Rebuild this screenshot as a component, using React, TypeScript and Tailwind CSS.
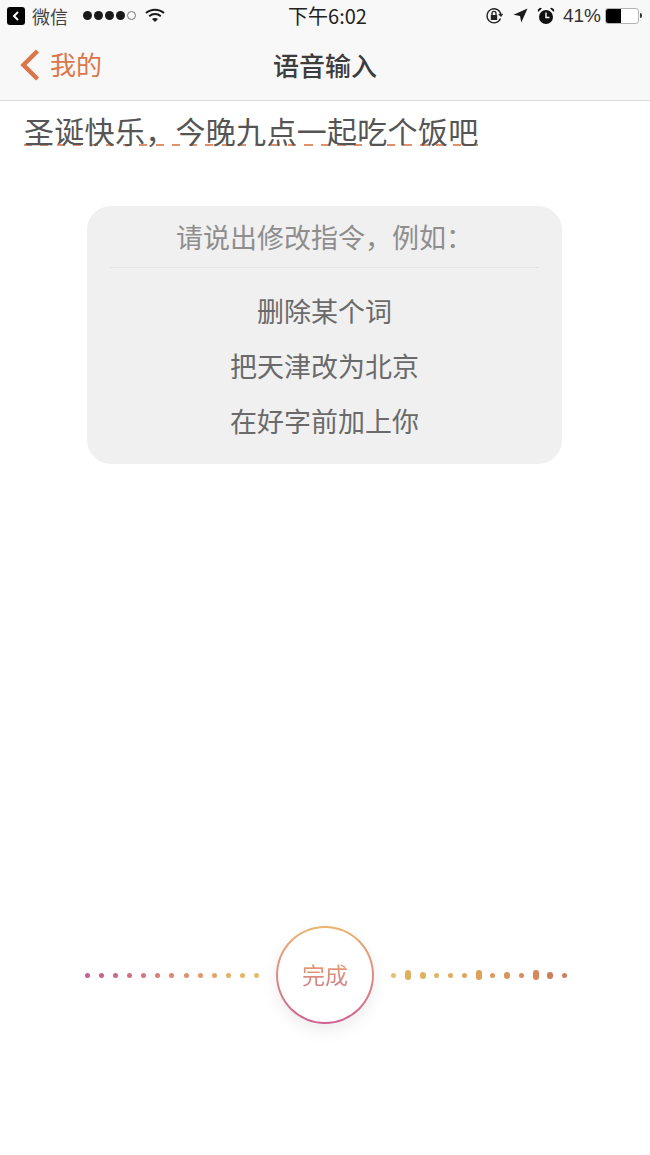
const leftDots = ["#c9608f", "#ca6390", "#cc688a", "#d06f85", "#d4767f", "#d87e78", "#dc8772", "#df906c", "#e29a68", "#e4a466", "#e6ae66", "#e6b468", "#e3bb6c"];

const rightDots = [
  { color: "#e8c070", size: "dot" },
  { color: "#dfb05c", size: "tall" },
  { color: "#e0b260", size: "mid" },
  { color: "#e2b266", size: "dot" },
  { color: "#e2aa62", size: "dot" },
  { color: "#e0a460", size: "dot" },
  { color: "#dfa05a", size: "tall" },
  { color: "#dc9a5e", size: "dot" },
  { color: "#d8945e", size: "mid" },
  { color: "#d88e62", size: "dot" },
  { color: "#d8865a", size: "tall" },
  { color: "#cf7c58", size: "mid" },
  { color: "#c9805e", size: "dot" },
];

const cjk = "font-['Noto_Sans_CJK_SC','Noto_Sans',sans-serif]";

const StatusBar = () => (
  <div className="flex h-[33px] items-center justify-between pb-[2px] pl-[7px] pr-[8px] text-[#222]">
    <div className="flex w-[206px] items-center">
      <div className="flex h-[18px] w-[18px] items-center justify-center rounded-[3px] bg-black">
        <svg width="8" height="10" viewBox="0 0 8 10" fill="none" stroke="white" strokeWidth="2">
          <path d="M6 1 L2 5 L6 9" />
        </svg>
      </div>
      <span className="ml-[7px] text-[18px] leading-none text-[#444]">微信</span>
      <div className="ml-[15px] flex items-center gap-[2px]">
        <span className="h-[9px] w-[9px] rounded-full bg-[#1a1a1a]" />
        <span className="h-[9px] w-[9px] rounded-full bg-[#1a1a1a]" />
        <span className="h-[9px] w-[9px] rounded-full bg-[#1a1a1a]" />
        <span className="h-[9px] w-[9px] rounded-full bg-[#1a1a1a]" />
        <span className="h-[9px] w-[9px] rounded-full border border-[#777]" />
      </div>
      <svg className="ml-[9px]" width="20" height="15" viewBox="0 0 20 15" fill="none" stroke="#1a1a1a" strokeWidth="2">
        <path d="M1 5 C6 0.5 14 0.5 19 5" />
        <path d="M4.2 8.2 C7.5 5.4 12.5 5.4 15.8 8.2" />
        <path d="M10 14 L7 11 C8.8 9.8 11.2 9.8 13 11 Z" fill="#1a1a1a" stroke="none" />
      </svg>
    </div>
    <span className="text-[20px] leading-none">下午6:02</span>
    <div className="flex w-[200px] items-center justify-end">
      <svg width="18" height="18" viewBox="0 0 18 18" fill="none" stroke="#222" strokeWidth="1.3">
        <path d="M15.5 11.5 A7 7 0 1 1 16 8" />
        <path d="M13.8 7 L16 9 L17.6 6.8" />
        <rect x="5.8" y="8" width="6.4" height="5" fill="#222" stroke="none" />
        <path d="M7 8 V6.4 A2 2 0 0 1 11 6.4 V8" />
      </svg>
      <svg className="ml-[10px]" width="15" height="15" viewBox="0 0 15 15" fill="#1a1a1a">
        <path d="M14.5 0.5 L8.3 14.5 L7 8 L0.5 6.7 Z" />
      </svg>
      <svg className="ml-[9px]" width="18" height="18" viewBox="0 0 18 18" fill="#111">
        <circle cx="9" cy="10" r="7" />
        <path d="M1 5 L5 1.5 L3 0.8 L0.8 2.8 Z" />
        <path d="M17 5 L13 1.5 L15 0.8 L17.2 2.8 Z" />
        <path d="M9 5.5 V10.5 H12.5" fill="none" stroke="white" strokeWidth="1.4" />
      </svg>
      <span className="ml-[8px] font-['Liberation_Sans',sans-serif] text-[19px] leading-none text-[#333]">41%</span>
      <div className="ml-[4px] flex items-center">
        <div className="h-[16px] w-[34px] overflow-hidden rounded-[3px] border border-[#b5b5b5] bg-white">
          <div className="h-full w-[15px] bg-black" />
        </div>
        <div className="ml-[1px] h-[5px] w-[2px] rounded-r-sm bg-[#333]" />
      </div>
    </div>
  </div>
);

const NavBar = () => (
  <div className="relative flex h-[68px] items-center justify-center border-b border-[#d9d9d9] pb-[3px]">
    <div className="absolute left-[20px] top-[16px] flex items-center text-[#d9764a]">
      <svg width="20" height="32" viewBox="0 0 20 32" fill="none" stroke="#d9764a" strokeWidth="4.5">
        <path d="M17.5 2 L3.5 16 L17.5 30" />
      </svg>
      <span className="ml-[10px] pb-[3px] text-[26px] leading-none">我的</span>
    </div>
    <span className="text-[26px] font-medium leading-none text-[#3d3d3d]">语音输入</span>
  </div>
);

export default function App() {
  return (
    <div className={`flex h-[1155px] w-[650px] flex-col overflow-hidden bg-white ${cjk}`}>
      <div className="bg-[#f8f8f8]">
        <StatusBar />
        <NavBar />
      </div>

      <div className="mt-[7px] pl-[24px]">
        <div className="relative w-fit">
          {/* dashed mark sits behind the glyphs */}
          <span className="absolute bottom-[6px] left-0 right-0 h-[2px] bg-[repeating-linear-gradient(90deg,#e0916a_0,#e0916a_8px,transparent_8px,transparent_16.5px)]" />
          <p className="relative text-[30px] leading-[44px] tracking-[0.3px] text-[#555]">
            圣诞快乐，今晚九点一起吃个饭吧
          </p>
        </div>
      </div>

      <div className="ml-[87px] mt-[54px] flex h-[258px] w-[475px] flex-col rounded-[24px] bg-[#f0f0f0] px-[23px] text-center">
        <div className="flex h-[62px] items-center justify-center border-b border-[#e4e4e4] text-[27px] leading-none text-[#8e8e8e]">
          请说出修改指令，例如：
        </div>
        <div className="mt-[23px] flex flex-col gap-[15px] text-[27px] leading-[40px] text-[#6a6a6a]">
          <p>删除某个词</p>
          <p>把天津改为北京</p>
          <p>在好字前加上你</p>
        </div>
      </div>

      <div className="mt-[462px] flex items-center justify-center">
        <div className="flex w-[176px] items-center justify-between pl-[2px]">
          {leftDots.map((color, i) => (
            <span key={i} className="h-[5px] w-[5px] rounded-full" style={{ backgroundColor: color }} />
          ))}
        </div>
        <div className="mx-[17px] h-[98px] w-[98px] rounded-full bg-gradient-to-b from-[#e9b56c] to-[#cf5f92] p-[2px] shadow-[0_6px_16px_rgba(0,0,0,0.08)]">
          <div className="flex h-full w-full items-center justify-center rounded-full bg-white">
            <span className="bg-gradient-to-b from-[#e8a268] to-[#d0788a] bg-clip-text pb-[2px] text-[23px] leading-[30px] text-transparent">
              完成
            </span>
          </div>
        </div>
        <div className="flex w-[176px] items-center justify-between">
          {rightDots.map((dot, i) => {
            if (dot.size === "tall") return <span key={i} className="h-[10px] w-[6px] rounded-full" style={{ backgroundColor: dot.color }} />;
            if (dot.size === "mid") return <span key={i} className="h-[7px] w-[6px] rounded-full" style={{ backgroundColor: dot.color }} />;
            return <span key={i} className="h-[5px] w-[5px] rounded-full" style={{ backgroundColor: dot.color }} />;
          })}
        </div>
      </div>
    </div>
  );
}
